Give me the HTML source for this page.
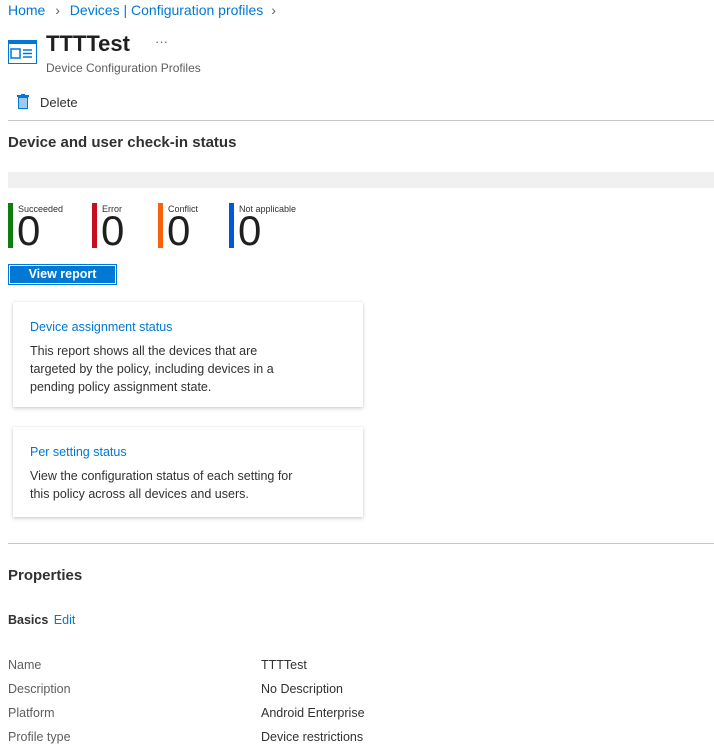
<!DOCTYPE html>
<html><head><style>
body{margin:0;width:714px;height:755px;overflow:hidden;background:#fff;font-family:"Liberation Sans",sans-serif;color:#323130;position:relative}
.a{position:absolute;white-space:nowrap}
.link{color:#0078d4}
.bar{position:absolute;width:5px;height:45px;top:203px}
.lab{position:absolute;top:204px;font-size:9px;color:#323130}
.z{position:absolute;top:210px;font-size:42px;line-height:42px;color:#201f1e}
.card{position:absolute;left:13px;width:350px;background:#fff;box-shadow:0 1.6px 4px rgba(0,0,0,.18),0 0 1px rgba(0,0,0,.12)}
.card .t{position:absolute;left:17px;top:18px;font-size:12.5px;color:#0078d4}
.card .d{position:absolute;left:17px;top:40px;font-size:12.5px;line-height:18px;width:270px;color:#323130}
.hr{position:absolute;left:8px;width:706px;height:1px;background:#c8c6c4}
.row{position:absolute;font-size:12.5px;color:#605e5c}
.val{position:absolute;left:261px;font-size:12.5px;color:#323130}
</style></head><body>
<div class="a link" style="left:8px;top:2px;font-size:14px">Home <span style="color:#605e5c;margin:0 6px">&#8250;</span> Devices | Configuration profiles <span style="color:#605e5c;margin-left:4px">&#8250;</span></div>
<svg class="a" style="left:8px;top:40px" width="29" height="24" viewBox="0 0 29 24"><rect x="0.5" y="0.5" width="28" height="23" fill="#fff" stroke="#0078d4"/><rect x="0" y="0" width="29" height="4" fill="#0078d4"/><rect x="3" y="9" width="9" height="9" fill="none" stroke="#0078d4" stroke-width="1.5"/><path d="M15 10h9M15 13.5h9M15 17h9" stroke="#0078d4" stroke-width="1.5"/></svg>
<div class="a" style="left:46px;top:31px;font-size:22px;font-weight:bold;color:#201f1e">TTTTest</div>
<div class="a" style="left:155px;top:34px;font-size:13px;color:#605e5c">···</div>
<div class="a" style="left:46px;top:61px;font-size:12px;color:#605e5c">Device Configuration Profiles</div>
<svg class="a" style="left:17px;top:94px" width="12" height="15" viewBox="0 0 12 15"><rect x="0" y="1" width="12" height="2" fill="#0078d4"/><rect x="4" y="0" width="4" height="2" fill="#0078d4"/><rect x="1.5" y="3.5" width="9" height="11" fill="#9fc9ef" stroke="#0078d4"/></svg>
<div class="a" style="left:40px;top:95px;font-size:13px">Delete</div>
<div class="hr" style="top:120px"></div>
<div class="a" style="left:8px;top:134px;font-size:15px;font-weight:bold;color:#323130">Device and user check-in status</div>
<div class="a" style="left:8px;top:172px;width:706px;height:16px;background:#f0f0f0"></div>
<div class="bar" style="left:8px;background:#107c10"></div><div class="lab" style="left:18px">Succeeded</div><div class="z" style="left:17px">0</div>
<div class="bar" style="left:92px;background:#c50f1f"></div><div class="lab" style="left:102px">Error</div><div class="z" style="left:101px">0</div>
<div class="bar" style="left:158px;background:#f7630c"></div><div class="lab" style="left:168px">Conflict</div><div class="z" style="left:167px">0</div>
<div class="bar" style="left:229px;background:#0058d4"></div><div class="lab" style="left:239px">Not applicable</div><div class="z" style="left:238px">0</div>
<div class="a" style="left:8px;top:264px;width:107px;height:19px;border:1px solid #0078d4;background:#0078d4;box-shadow:inset 0 0 0 1px #fff;color:#fff;font-size:12.5px;font-weight:bold;text-align:center;line-height:19px">View report</div>
<div class="card" style="top:302px;height:105px"><div class="t">Device assignment status</div><div class="d">This report shows all the devices that are targeted by the policy, including devices in a pending policy assignment state.</div></div>
<div class="card" style="top:427px;height:90px"><div class="t">Per setting status</div><div class="d">View the configuration status of each setting for this policy across all devices and users.</div></div>
<div class="hr" style="top:543px"></div>
<div class="a" style="left:8px;top:567px;font-size:15px;font-weight:bold">Properties</div>
<div class="a" style="left:8px;top:613px;font-size:12.5px;font-weight:bold">Basics <span class="link" style="font-weight:normal;margin-left:2px">Edit</span></div>
<div class="row" style="left:8px;top:658px">Name</div><div class="val" style="top:658px">TTTTest</div>
<div class="row" style="left:8px;top:682px">Description</div><div class="val" style="top:682px">No Description</div>
<div class="row" style="left:8px;top:706px">Platform</div><div class="val" style="top:706px">Android Enterprise</div>
<div class="row" style="left:8px;top:730px">Profile type</div><div class="val" style="top:730px">Device restrictions</div>
</body></html>
